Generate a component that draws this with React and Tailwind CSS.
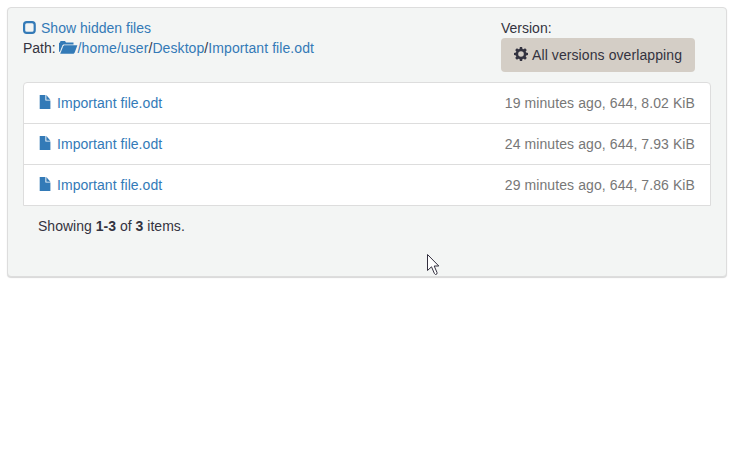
import React from "react";

const versions = [
  "19 minutes ago, 644, 8.02 KiB",
  "24 minutes ago, 644, 7.93 KiB",
  "29 minutes ago, 644, 7.86 KiB",
];

function UncheckedIcon() {
  return (
    <svg className="h-[14px] w-[13px]" viewBox="0 0 13 14" fill="none">
      <rect x="1.1" y="1.2" width="10.6" height="10.7" rx="2.6" stroke="currentColor" strokeWidth="2.2" />
    </svg>
  );
}

function FolderOpenIcon() {
  return (
    <svg className="-ml-px -mt-px h-[13px] w-[19px] shrink-0" viewBox="0 0 19 13" fill="currentColor">
      <path d="M0 11V2L1 1.4 1.5 0H6L7 1.4H14.5V3.4H4.3L3.3 4.4 1 10.4Z" />
      <path d="M1.2 12.7 4.2 5.2 5.2 4.3H18.4L15.6 11.8 14.6 12.7Z" />
    </svg>
  );
}

function FileIcon() {
  return (
    <svg className="-mt-[2px] h-[14px] w-[12px] shrink-0" viewBox="0 0 12 14" fill="currentColor">
      <path d="M.7 0H6.4V5.6H11.4V14H.7Z" />
      <path d="M7.3 0 11.4 4.7H7.3Z" />
    </svg>
  );
}

function CogIcon() {
  return (
    <svg className="-mt-[2px] h-[14px] w-[14px] shrink-0" viewBox="0 0 14 14" fill="currentColor">
      <path
        fillRule="evenodd"
        d="M5.9 0H8.1L8.5 1.9 9.5 2.3 11.1 1.2 12.8 2.9 11.7 4.5 12.1 5.5 14 5.9V8.1L12.1 8.5 11.7 9.5 12.8 11.1 11.1 12.8 9.5 11.7 8.5 12.1 8.1 14H5.9L5.5 12.1 4.5 11.7 2.9 12.8 1.2 11.1 2.3 9.5 1.9 8.5 0 8.1V5.9L1.9 5.5 2.3 4.5 1.2 2.9 2.9 1.2 4.5 2.3 5.5 1.9ZM7 4.2A2.8 2.8 0 1 0 7 9.8 2.8 2.8 0 1 0 7 4.2Z"
      />
    </svg>
  );
}

function Cursor() {
  return (
    <svg className="absolute left-[427px] top-[254px] h-[22px] w-[13px]" viewBox="0 0 13 22">
      <path
        d="M.5.5V16.5L4.5 12.8 7.4 19.5 8.5 20.5 10 19.8 10 18.5 7.2 12H11.8Z"
        fill="#fff"
        stroke="#33303f"
        strokeWidth="1"
      />
    </svg>
  );
}

export default function App() {
  return (
    <div className="relative h-[463px] w-[733px] bg-white pl-[7px] pt-[7px] font-['Liberation_Sans',Arial,sans-serif] text-[14px] leading-[20px] text-[#333340]">
      <div className="h-[270px] w-[720px] rounded-[4px] border border-[#dddddd] bg-[#f3f5f4] px-[15px] pt-[10px] shadow-[0_1px_1px_#d8d8d8]">
        <div className="flex h-[64px] justify-between pr-[16px]">
          <div>
            <a className="flex items-center gap-[5px] text-[#337ab7]">
              <UncheckedIcon />
              <span className="tracking-[0.02px]">Show hidden files</span>
            </a>
            <div className="flex items-center whitespace-pre">
              <span>Path: </span>
              <span className="flex items-center text-[#337ab7]">
                <FolderOpenIcon />
                <span className="tracking-[0.08px]">
                  /home/user<span className="text-[#333340]">/</span>Desktop<span className="text-[#333340]">/</span>Important file.odt
                </span>
              </span>
            </div>
          </div>
          <div className="w-[194px]">
            <div>Version:</div>
            <button className="flex h-[34px] w-[194px] items-center gap-[4px] rounded-[4px] bg-[#d4cec6] pl-[13px]">
              <CogIcon />
              <span className="whitespace-nowrap tracking-[0.09px]">All versions overlapping</span>
            </button>
          </div>
        </div>
        <ul className="divide-y divide-[#dddddd] rounded-t-[4px] border border-[#dddddd] bg-white">
          {versions.map((details) => (
            <li key={details} className="flex h-[41px] items-center justify-between px-[15px] last:h-[40px]">
              <a className="flex items-center gap-[6px] text-[#337ab7]">
                <FileIcon />
                <span className="tracking-[0.05px]">Important file.odt</span>
              </a>
              <span className="tracking-[0.09px] text-[#777777]">{details}</span>
            </li>
          ))}
        </ul>
        <div className="px-[15px] pt-[10px] tracking-[0.02px]">
          Showing <b>1-3</b> of <b>3</b> items.
        </div>
      </div>
      <Cursor />
    </div>
  );
}
